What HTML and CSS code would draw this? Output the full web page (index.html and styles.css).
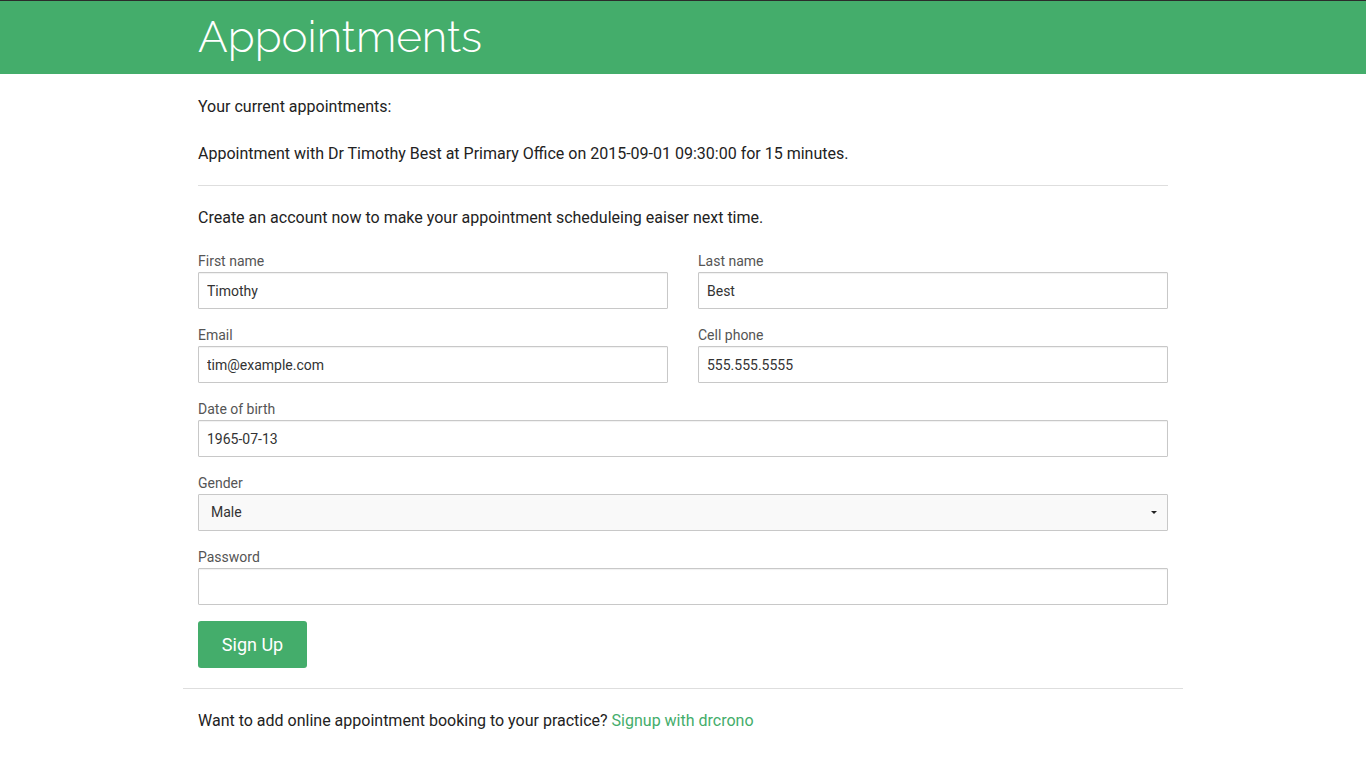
FILE: index.html
```html
<!DOCTYPE html>
<html lang="en">
<head>
<meta charset="utf-8">
<title>Appointments</title>
<link rel="stylesheet" href="styles.css">
</head>
<body>
<header class="topbar">
  <div class="container">
    <h1 class="title">Appointments</h1>
  </div>
</header>
<main class="container">
  <div class="inner">
    <p class="lead-first">Your current appointments:</p>
    <p class="appt">Appointment with Dr Timothy Best at Primary Office on 2015-09-01 09:30:00 for 15 minutes.</p>
    <hr class="rule">
    <p class="intro">Create an account now to make your appointment scheduleing eaiser next time.</p>
    <form class="form">
      <div class="row">
        <div class="group">
          <label class="label">First name</label>
          <input class="input" type="text" value="Timothy">
        </div>
        <div class="group">
          <label class="label">Last name</label>
          <input class="input" type="text" value="Best">
        </div>
      </div>
      <div class="row">
        <div class="group">
          <label class="label">Email</label>
          <input class="input" type="text" value="tim@example.com">
        </div>
        <div class="group">
          <label class="label">Cell phone</label>
          <input class="input" type="text" value="555.555.5555">
        </div>
      </div>
      <div class="group">
        <label class="label">Date of birth</label>
        <input class="input" type="text" value="1965-07-13">
      </div>
      <div class="group">
        <label class="label">Gender</label>
        <div class="select">
          <span>Male</span>
          <span class="caret"></span>
        </div>
      </div>
      <div class="group">
        <label class="label">Password</label>
        <input class="input" type="password" value="">
      </div>
      <button class="btn" type="button">Sign Up</button>
    </form>
  </div>
  <hr class="rule-wide">
  <div class="inner">
    <p class="footer-text">Want to add online appointment booking to your practice? <a class="link" href="#">Signup with drcrono</a></p>
  </div>
</main>
</body>
</html>
```

FILE: styles.css
```css
* { box-sizing: border-box; }
html, body { margin: 0; padding: 0; background: #fff; }
body {
  font-family: Roboto, "Liberation Sans", sans-serif;
  font-size: 16px;
  line-height: 21px;
  color: #222;
}
.container {
  width: 1000px;
  margin: 0 auto;
  padding: 0 15px;
}
.topbar {
  background: #44ad6b;
  border-top: 1px solid #2b2b2b;
  height: 74px;
}
.title {
  margin: 0;
  font-family: Raleway, Lato, "Open Sans", sans-serif;
  font-weight: 300;
  font-size: 44px;
  line-height: 72px;
  color: #fff;
}
main.container { padding: 0; }
.inner { padding: 0 15px; }
p { margin: 0; }
.lead-first { margin-top: 22px; }
.appt { margin-top: 26px; }
.rule {
  border: 0;
  border-top: 1px solid #dedede;
  margin: 21px 0 21px;
}
.intro { margin-bottom: 24px; }
.row {
  display: grid;
  grid-template-columns: 1fr 1fr;
  column-gap: 30px;
}
.group { margin-bottom: 17px; }
.label {
  display: block;
  font-size: 14px;
  line-height: 18px;
  color: #555;
  margin-bottom: 2px;
}
.input {
  display: block;
  width: 100%;
  height: 37px;
  border: 1px solid #c8c8c8;
  border-radius: 1px;
  box-shadow: inset 0 1px 1px rgba(0,0,0,0.06);
  padding: 0 8px;
  font-family: Roboto, "Liberation Sans", sans-serif;
  font-size: 14px;
  color: #333;
  background: #fff;
}
.select {
  display: flex;
  align-items: center;
  justify-content: space-between;
  height: 37px;
  border: 1px solid #c8c8c8;
  border-radius: 1px;
  background: #f9f9f9;
  padding: 0 10px 0 12px;
  font-size: 14px;
  color: #333;
}
.caret {
  width: 0;
  height: 0;
  border-left: 3px solid transparent;
  border-right: 3px solid transparent;
  border-top: 3px solid #222;
}
.btn {
  display: block;
  width: 109px;
  height: 47px;
  margin-top: -1px;
  border: 0;
  border-radius: 3px;
  background: #44ad6b;
  color: #fff;
  font-family: Roboto, "Liberation Sans", sans-serif;
  font-size: 18px;
  padding: 0;
}
.rule-wide {
  border: 0;
  border-top: 1px solid #dedede;
  margin: 20px 0 21px;
}
.footer-text { margin: 0 0 30px; }
.link { color: #44ad6b; text-decoration: none; }
```
